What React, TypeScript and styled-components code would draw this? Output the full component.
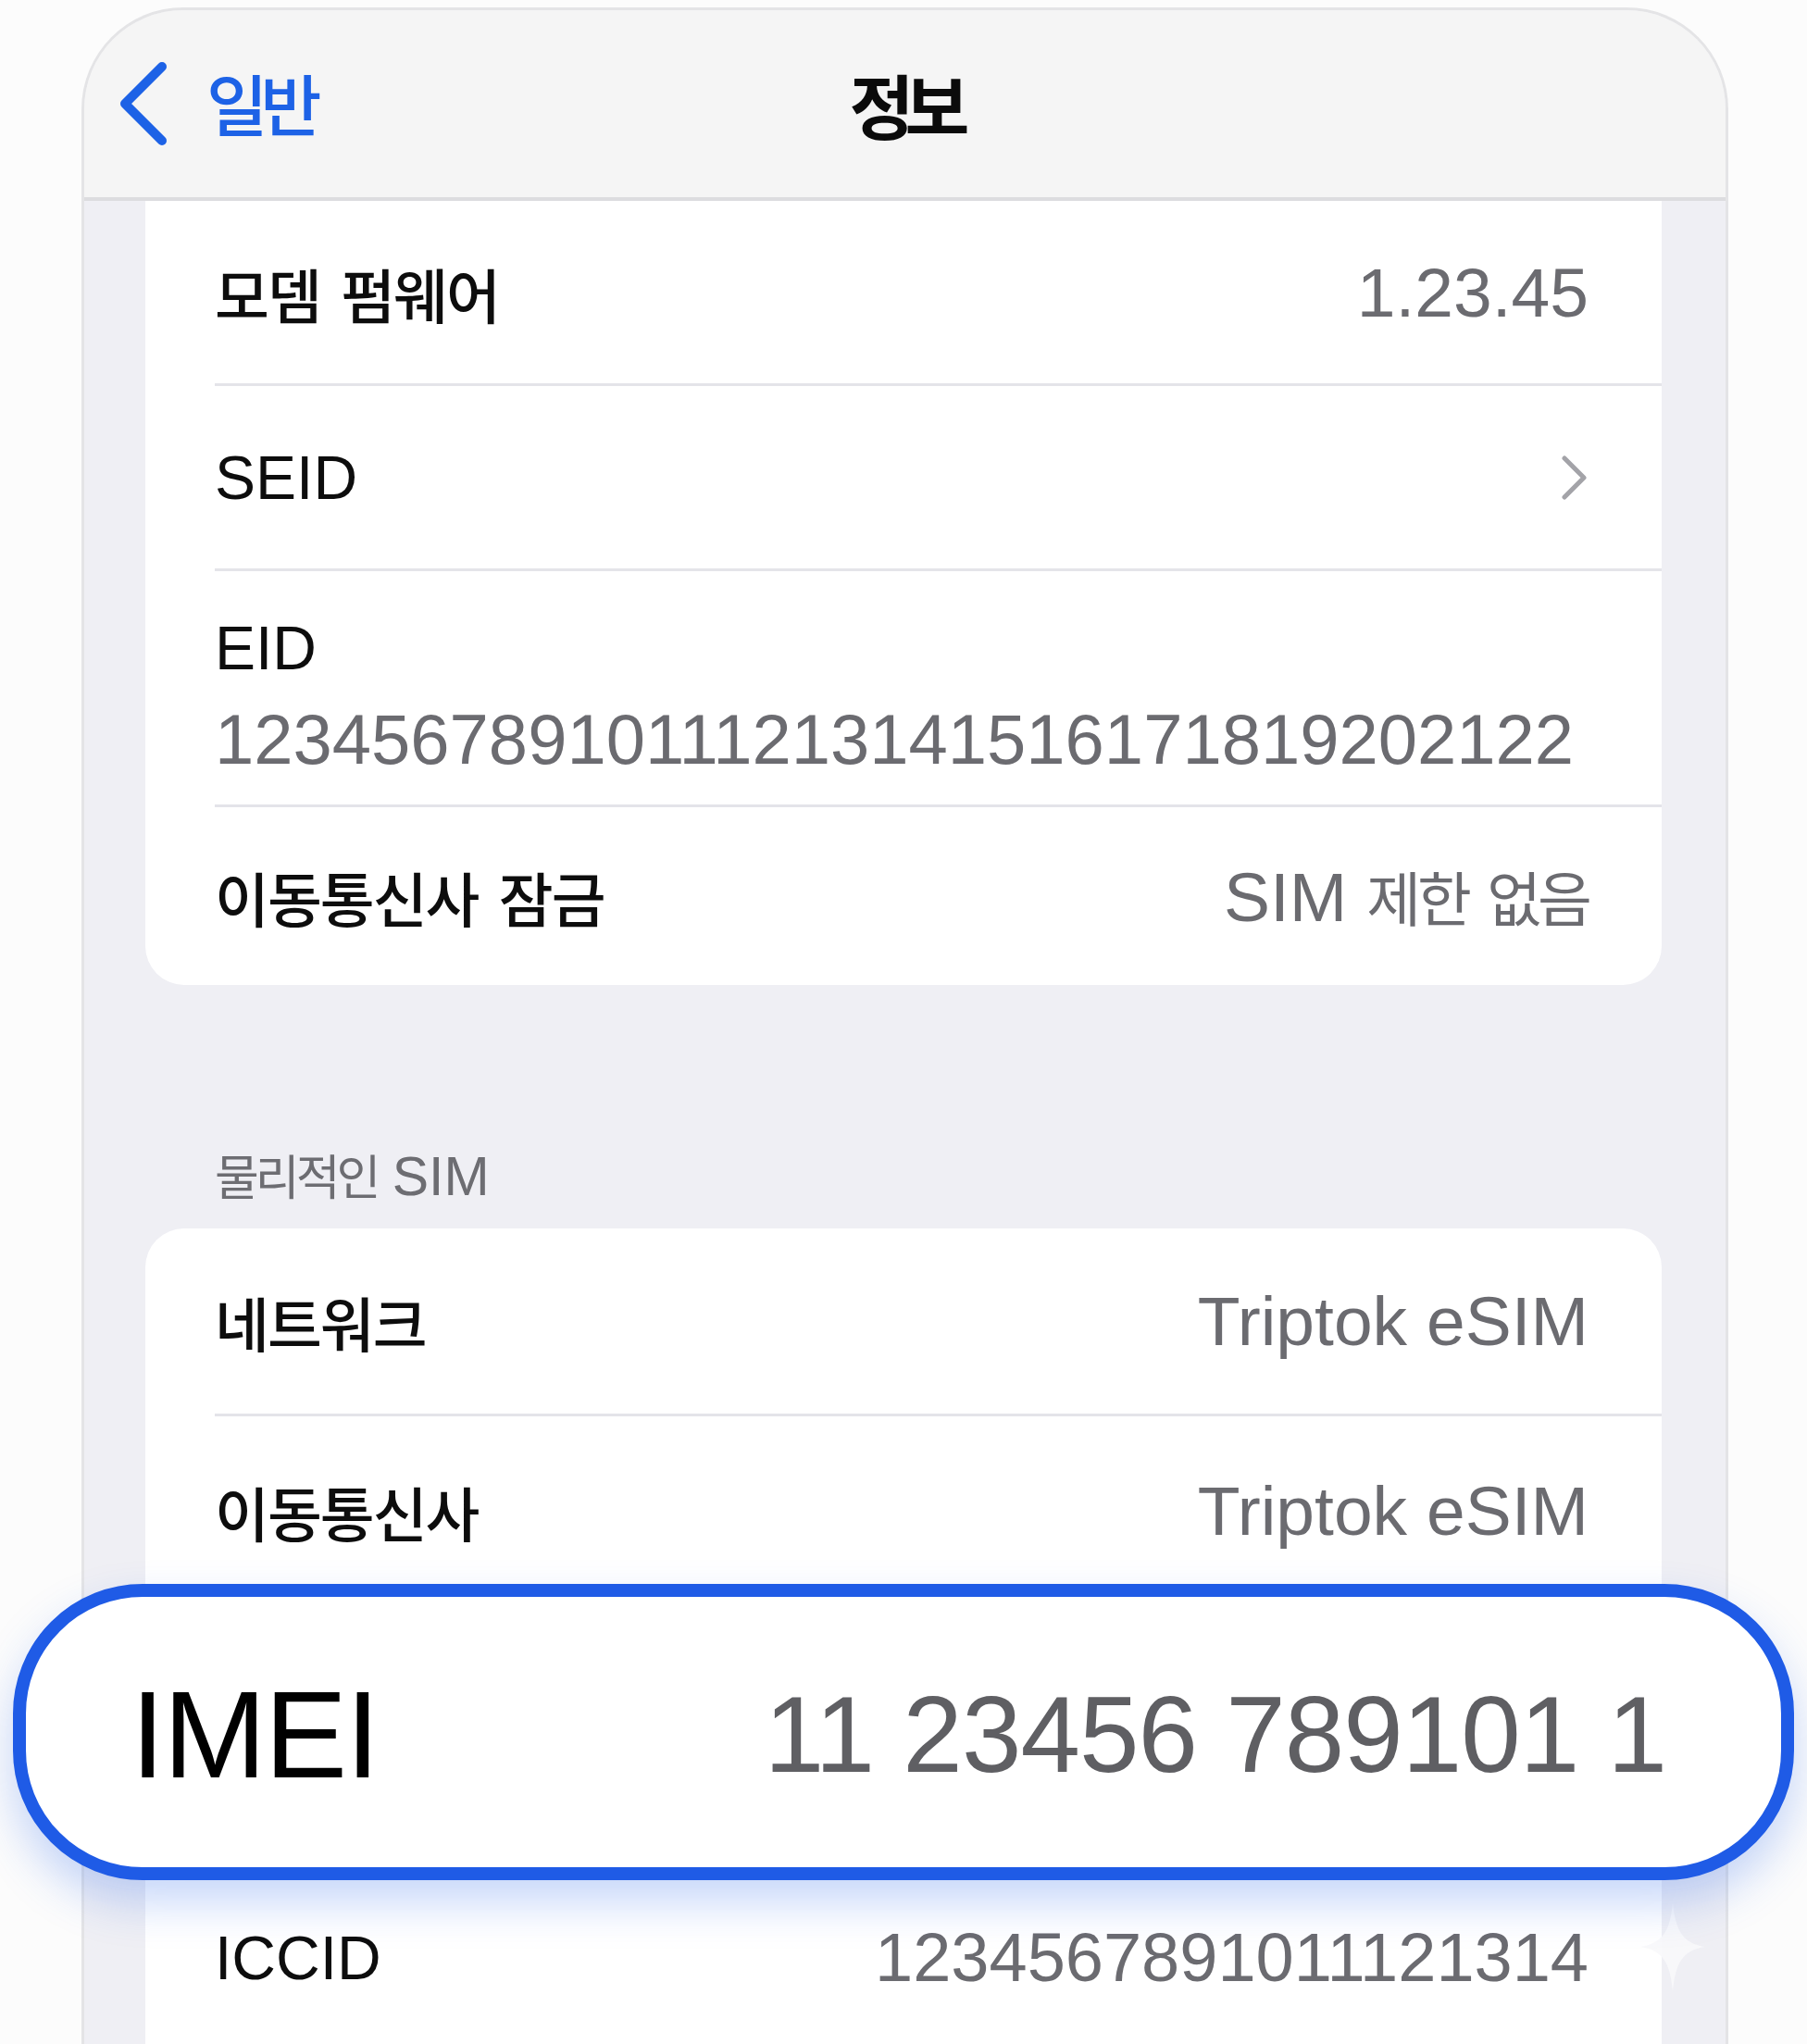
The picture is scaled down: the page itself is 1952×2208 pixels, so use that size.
import styled, { createGlobalStyle } from 'styled-components'

const GlobalStyle = createGlobalStyle`
  html, body {
    margin: 0;
    padding: 0;
    background: #fcfcfc;
    overflow: hidden;
  }
  body {
    font-family: "Liberation Sans", "Noto Sans CJK KR", sans-serif;
    color: #111;
  }
`

const Page = styled.div`
  padding: 8px 0 0 88px;
  height: 2200px;
`

const Frame = styled.div`
  position: relative;
  width: 1773px;
  height: 2200px;
  background: #efeff4;
  border: 3px solid #e4e4e6;
  border-bottom: none;
  border-radius: 110px 110px 0 0;
`

const NavBar = styled.div`
  display: grid;
  grid-template-columns: 1fr auto 1fr;
  align-items: center;
  height: 202px;
  padding: 0 36px;
  background: #f5f5f5;
  border-bottom: 4px solid #dcdcdf;
  border-radius: 107px 107px 0 0;
`

const Back = styled.div`
  display: flex;
  align-items: center;
  gap: 40px;
  color: #1d62e6;
`

const BackText = styled.span`
  font-family: "Noto Sans CJK KR", sans-serif;
  font-size: 72px;
  font-weight: 500;
  letter-spacing: -8px;
  line-height: 1;
  margin-top: -4px;
`

const Title = styled.div`
  font-family: "Noto Sans CJK KR", sans-serif;
  font-size: 76px;
  font-weight: 700;
  letter-spacing: -10px;
  line-height: 1;
  color: #0b0b0b;
`

const Card = styled.div<{ $scrolled?: boolean }>`
  margin: 0 69px 0 66px;
  padding-bottom: ${p => (p.$scrolled ? 0 : 80)}px;
  background: #fff;
  border-radius: ${p => (p.$scrolled ? '0 0 42px 42px' : '42px 42px 0 0')};
`

const Row = styled.div<{ $h: number; $last?: boolean }>`
  display: flex;
  align-items: center;
  justify-content: space-between;
  height: ${p => p.$h}px;
  margin-left: 75px;
  padding-right: 79px;
  border-bottom: ${p => (p.$last ? 'none' : '3px solid #e4e4e9')};
`

const StackRow = styled.div`
  display: flex;
  flex-direction: column;
  justify-content: flex-start;
  gap: 14px;
  height: 255px;
  box-sizing: border-box;
  padding-top: 43px;
  margin-left: 75px;
  border-bottom: 3px solid #e4e4e9;
`

const Label = styled.div<{ $ko?: boolean }>`
  font-family: ${p => (p.$ko ? '"Noto Sans CJK KR"' : '"Liberation Sans"')}, sans-serif;
  font-size: ${p => (p.$ko ? 64 : 66)}px;
  font-weight: ${p => (p.$ko ? 500 : 400)};
  letter-spacing: ${p => (p.$ko ? -2 : 0)}px;
  word-spacing: ${p => (p.$ko ? 10 : 0)}px;
  line-height: 80px;
  color: #0d0d0d;
  white-space: nowrap;
`

const Value = styled.div<{ $size?: number }>`
  font-size: ${p => p.$size ?? 75}px;
  line-height: 90px;
  color: #6b6b70;
  white-space: nowrap;
`

const Hangul = styled.span<{ $size: number }>`
  font-family: "Noto Sans CJK KR", sans-serif;
  font-size: ${p => p.$size}px;
  letter-spacing: -4px;
  word-spacing: 10px;
`

const SectionHeader = styled.div`
  margin: 170px 0 21px 141px;
  font-size: 59px;
  line-height: 70px;
  color: #6d6d72;
`

const Callout = styled.div`
  position: relative;
  z-index: 2;
  display: flex;
  align-items: center;
  justify-content: space-between;
  height: 292px;
  margin: -22px -143px 0 -143px;
  padding: 0 124px 0 113px;
  background: #fff;
  border: 14px solid #1f5be6;
  border-radius: 140px;
  box-shadow: 0 24px 48px rgba(40, 100, 235, 0.26);
`

const CalloutLabel = styled.div`
  font-size: 134px;
  letter-spacing: -2px;
  line-height: 1;
  color: #000;
  margin-top: 6px;
`

const CalloutValue = styled.div`
  font-size: 116px;
  letter-spacing: -1px;
  line-height: 1;
  color: #5f5f63;
  margin-top: 6px;
`

const Sparkle = styled.svg`
  position: absolute;
  right: 22px;
  bottom: 60px;
`

function Chevron() {
  return (
    <svg width="30" height="48" viewBox="0 0 30 48">
      <path d="M4 3 L25 24 L4 45" fill="none" stroke="#a3a3a8" strokeWidth="5" strokeLinecap="round" strokeLinejoin="round" />
    </svg>
  )
}

function BackChevron() {
  return (
    <svg width="56" height="92" viewBox="0 0 56 92">
      <path d="M48 6 L8 46 L48 86" fill="none" stroke="#1d62e6" strokeWidth="10" strokeLinecap="round" strokeLinejoin="round" />
    </svg>
  )
}

export default function App() {
  return (
    <>
      <GlobalStyle />
      <Page>
        <Frame>
          <NavBar>
            <Back>
              <BackChevron />
              <BackText>일반</BackText>
            </Back>
            <Title>정보</Title>
            <div />
          </NavBar>

          <Card $scrolled>
            <Row $h={197}>
              <Label $ko>모뎀 펌웨어</Label>
              <Value>1.23.45</Value>
            </Row>
            <Row $h={197}>
              <Label>SEID</Label>
              <Chevron />
            </Row>
            <StackRow>
              <Label>EID</Label>
              <Value $size={76}>12345678910111213141516171819202122</Value>
            </StackRow>
            <Row $h={192} $last>
              <Label $ko>이동통신사 잠금</Label>
              <Value>
                SIM <Hangul $size={64}>제한 없음</Hangul>
              </Value>
            </Row>
          </Card>

          <SectionHeader>
            <Hangul $size={52}>물리적인</Hangul> SIM
          </SectionHeader>

          <Card>
            <Row $h={200}>
              <Label $ko>네트워크</Label>
              <Value>Triptok eSIM</Value>
            </Row>
            <Row $h={203} $last>
              <Label $ko>이동통신사</Label>
              <Value>Triptok eSIM</Value>
            </Row>
            <Callout>
              <CalloutLabel>IMEI</CalloutLabel>
              <CalloutValue>11 23456 789101 1</CalloutValue>
            </Callout>
            <Row $h={168} $last>
              <Label>ICCID</Label>
              <Value $size={74}>1234567891011121314</Value>
            </Row>
          </Card>

          <Sparkle width="70" height="96" viewBox="0 0 70 96">
            <path d="M35 0 C38 30 45 44 70 48 C45 52 38 66 35 96 C32 66 25 52 0 48 C25 44 32 30 35 0 Z" fill="#f8f8fb" opacity="0.9" />
          </Sparkle>
        </Frame>
      </Page>
    </>
  )
}
